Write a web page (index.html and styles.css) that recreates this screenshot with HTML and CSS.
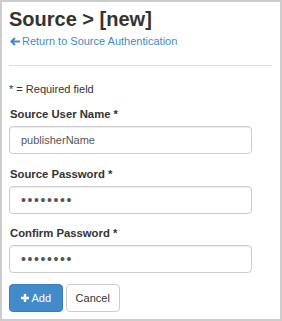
FILE: index.html
```html
<!DOCTYPE html>
<html lang="en">
<head>
    <meta charset="UTF-8">
    <title>Source - New</title>
    <link rel="stylesheet" href="styles.css">
</head>
<body>
    <div class="panel">
        <h1>Source &gt; [new]</h1>
        <a class="back-link" href="#">
            <svg class="arrow" width="10" height="9" viewBox="0 0 10 9">
                <path d="M0 4.5 L4.3 0.3 L5.7 1.7 L3.8 3.5 H10 V5.5 H3.8 L5.7 7.3 L4.3 8.7 Z" fill="#428bca"/>
            </svg>
            Return to Source Authentication
        </a>
        <hr>

        <p class="note">* = Required field</p>

        <form>
            <div class="field">
                <label>Source User Name *</label>
                <input type="text" value="publisherName">
            </div>
            <div class="field">
                <label>Source Password *</label>
                <input type="password" value="password">
            </div>
            <div class="field">
                <label>Confirm Password *</label>
                <input type="password" value="password">
            </div>
            <div class="actions">
                <button type="button" class="btn btn-primary">
                    <svg width="8" height="8" viewBox="0 0 8 8">
                        <path d="M2.8 0 H5.2 V2.8 H8 V5.2 H5.2 V8 H2.8 V5.2 H0 V2.8 H2.8 Z" fill="white"/>
                    </svg>
                    Add
                </button>
                <button type="button" class="btn">Cancel</button>
            </div>
        </form>
    </div>
</body>
</html>
```

FILE: styles.css
```css
/* Global */
html, body {
    margin: 0;
    padding: 0;
}

body {
    font-family: "Liberation Sans", Arial, sans-serif;
    font-size: 11px;
    color: #333;
    background: #fff;
}

/* Panel frame */
.panel {
    width: 282px;
    height: 321px;
    box-sizing: border-box;
    border: 2px solid #ccc;
    padding: 5px 8px 0 7px;
    overflow: hidden;
}

h1 {
    margin: 0;
    font-size: 20px;
    font-weight: bold;
    line-height: 24px;
    color: #333;
}

.back-link {
    display: flex;
    align-items: center;
    gap: 2px;
    margin-top: 3px;
    padding-left: 1px;
    color: #428bca;
    text-decoration: none;
    font-size: 11px;
    line-height: 14px;
}

hr {
    border: 0;
    border-top: 1px solid #ddd;
    margin: 17px 0 0 0;
}

.note {
    margin: 16px 0 0 0;
    line-height: 14px;
}

/* Form */
.field {
    margin-top: 11px;
}

.field + .field {
    margin-top: 12.5px;
}

label {
    display: block;
    font-weight: bold;
    font-size: 11.3px;
    line-height: 14px;
    margin-bottom: 5px;
    padding-left: 1px;
}

input {
    display: block;
    width: 243px;
    height: 28px;
    box-sizing: border-box;
    padding: 4px 11px;
    border: 1px solid #ccc;
    border-radius: 4px;
    font-family: "Liberation Sans", Arial, sans-serif;
    font-size: 11px;
    color: #555;
    box-shadow: inset 0 1px 1px rgba(0, 0, 0, 0.075);
}

input[type="password"] {
    font-size: 14px;
    letter-spacing: 1.6px;
}

.actions {
    display: flex;
    gap: 3px;
    margin-top: 11px;
}

.btn {
    display: flex;
    align-items: center;
    gap: 3px;
    height: 28px;
    box-sizing: border-box;
    padding: 0 9px;
    border: 1px solid #ccc;
    border-radius: 4px;
    background: #fff;
    color: #333;
    font-family: "Liberation Sans", Arial, sans-serif;
    font-size: 11px;
}

.btn-primary {
    padding: 0 10.5px;
    background: #428bca;
    border-color: #357ebd;
    color: #fff;
}
```
